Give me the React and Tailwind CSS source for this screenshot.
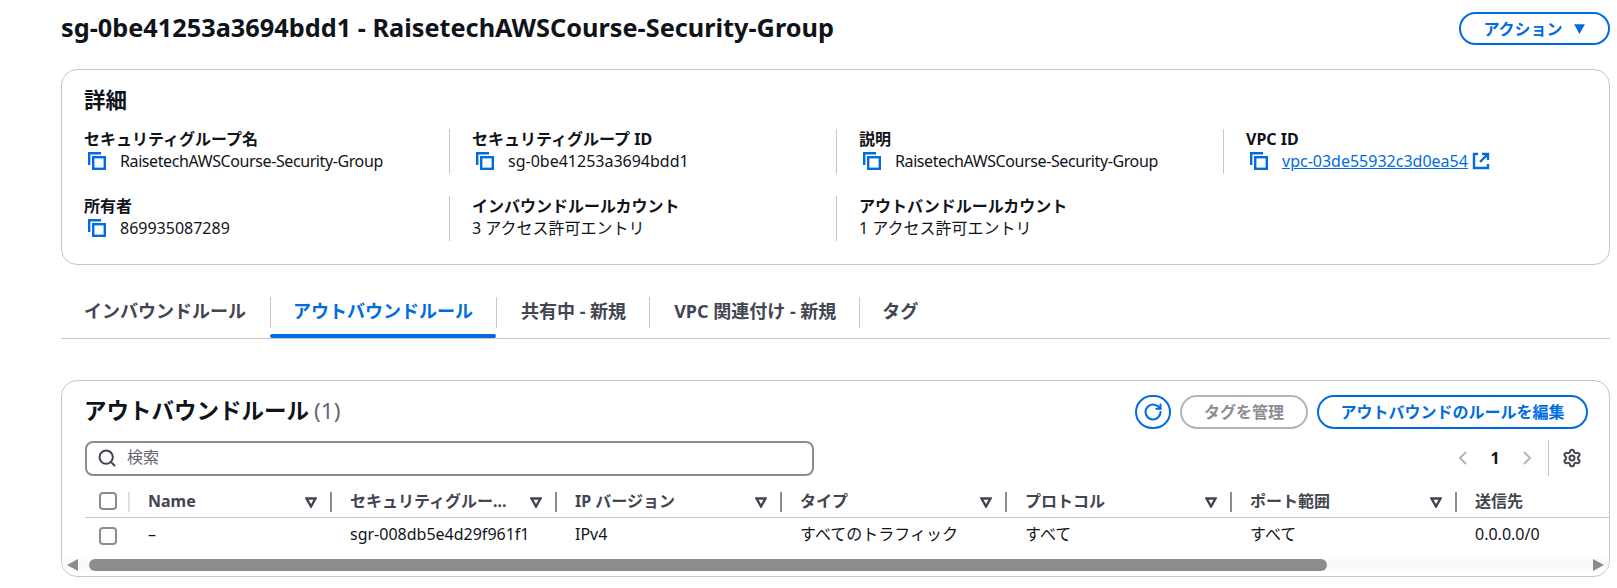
import { RotateCw, Search, Settings } from "lucide-react";

const GRID = "grid grid-cols-[45px_202px_225px_225px_225px_225px_225px_1fr]";

function CopyIcon() {
  return (
    <svg width="18" height="18" viewBox="0 0 18 18" fill="none" stroke="#006ce0" strokeWidth="2.4" className="shrink-0">
      <path d="M1.2 13V1.2H13" />
      <rect x="5.2" y="5.2" width="11.6" height="11.6" />
    </svg>
  );
}

function ExternalIcon() {
  return (
    <svg width="18" height="18" viewBox="0 0 18 18" fill="none" stroke="#006ce0" strokeWidth="2.4" className="shrink-0">
      <path d="M6 2H2v14h14v-4" />
      <path d="M10 2h6v6M16 2L8 10" />
    </svg>
  );
}

function FilterIcon() {
  return (
    <svg width="12" height="12" viewBox="0 0 12 12" fill="none" stroke="#424650" strokeWidth="2.4" className="shrink-0">
      <path d="M1.5 2.5h9L6 10.5z" />
    </svg>
  );
}

function Pager({ d }) {
  return (
    <svg width="10" height="14" viewBox="0 0 10 14" fill="none" stroke="#b4b4bb" strokeWidth="2" className="shrink-0">
      <path d={d} />
    </svg>
  );
}

function Checkbox() {
  return <div className="w-[18px] h-[18px] rounded-[4px] border-2 border-[#8c8c94] bg-white" />;
}

function Field({ label, children, divider }) {
  return (
    <div className={`h-[45px] ${divider ? "border-l border-[#c6c6cd] pl-[22px]" : ""}`}>
      <div className="text-base leading-[20px] font-bold text-[#0f141a]">{label}</div>
      <div className="text-base leading-[24px] text-[#0f141a] flex items-center">{children}</div>
    </div>
  );
}

function CopyValue({ children }) {
  return (
    <span className="flex items-center">
      <span className="pl-1 w-9 shrink-0 flex"><CopyIcon /></span>
      {children}
    </span>
  );
}

function Tab({ label, active, first, pad }) {
  return (
    <div className="flex flex-col">
      <div
        className={`h-[31px] flex items-center pb-[3px] text-lg font-bold ${first ? "" : "border-l border-[#c6c6cd]"} ${pad} ${
          active ? "text-[#006ce0]" : "text-[#424650]"
        }`}
      >
        {label}
      </div>
      <div className={`mt-[6px] h-1 rounded-[2px] ${active ? "bg-[#006ce0]" : ""}`} />
    </div>
  );
}

function HeadCell({ label, last }) {
  return (
    <div className="flex items-center justify-between pl-[18px] h-5">
      <span className="text-base leading-[20px] pb-[3px] font-bold text-[#424650] whitespace-nowrap">{label}</span>
      {!last && (
        <span className="flex items-center gap-[13px]">
          <FilterIcon />
          <span className="w-0.5 h-5 bg-[#8c8c94]" />
        </span>
      )}
    </div>
  );
}

export default function App() {
  const heads = ["Name", "セキュリティグルー...", "IP バージョン", "タイプ", "プロトコル", "ポート範囲", "送信先"];
  const cells = ["–", "sgr-008db5e4d29f961f1", "IPv4", "すべてのトラフィック", "すべて", "すべて", "0.0.0.0/0"];

  return (
    <div className="w-[1617px] h-[588px] overflow-hidden bg-white pl-[61px] pr-[7px] pt-3 font-['Noto_Sans','Noto_Sans_CJK_JP',sans-serif]">
      {/* header */}
      <div className="flex items-center justify-between h-[33px]">
        <h1 className="text-[25.3px] leading-[33px] pb-0.5 font-bold text-[#0f141a] whitespace-nowrap">
          sg-0be41253a3694bdd1 - RaisetechAWSCourse-Security-Group
        </h1>
        <button className="w-[151px] h-[33px] rounded-full border-2 border-[#006ce0] text-[#006ce0] text-base font-bold flex items-center justify-center gap-[10px]">
          アクション
          <svg width="13" height="13" viewBox="0 0 12 12" fill="#006ce0"><path d="M1 2h10L6 11z" /></svg>
        </button>
      </div>

      {/* details */}
      <section className="mt-6 h-[196px] border border-[#c6c6cd] rounded-2xl pl-[22px] pt-4">
        <h2 className="text-[21.5px] leading-[28px] font-bold text-[#0f141a]">詳細</h2>
        <div className="mt-[15px] grid grid-cols-[365px_387px_387px_1fr] gap-y-[22px]">
          <Field label="セキュリティグループ名"><CopyValue><span className="tracking-[-0.4px]">RaisetechAWSCourse-Security-Group</span></CopyValue></Field>
          <Field label="セキュリティグループ ID" divider><CopyValue>sg-0be41253a3694bdd1</CopyValue></Field>
          <Field label="説明" divider><CopyValue><span className="tracking-[-0.4px]">RaisetechAWSCourse-Security-Group</span></CopyValue></Field>
          <Field label="VPC ID" divider>
            <CopyValue>
              <span className="text-[#006ce0] underline">vpc-03de55932c3d0ea54</span>
              <span className="ml-1 flex"><ExternalIcon /></span>
            </CopyValue>
          </Field>
          <Field label="所有者"><CopyValue>869935087289</CopyValue></Field>
          <Field label="インバウンドルールカウント" divider>3 アクセス許可エントリ</Field>
          <Field label="アウトバンドルールカウント" divider>1 アクセス許可エントリ</Field>
        </div>
      </section>

      {/* tabs */}
      <div className="mt-8 flex border-b border-[#c6c6cd] h-[42px]">
        <Tab label="インバウンドルール" first pad="pl-[23px] pr-6" />
        <Tab label="アウトバウンドルール" active pad="pl-[22px] pr-[23px]" />
        <Tab label="共有中 - 新規" pad="pl-6 pr-[23px]" />
        <Tab label="VPC 関連付け - 新規" pad="pl-6 pr-[23px]" />
        <Tab label="タグ" pad="pl-[22px] pr-6" />
      </div>

      {/* rules table */}
      <section className="mt-[41px] h-[197px] border border-[#c6c6cd] rounded-2xl overflow-hidden">
        <div className="flex items-center justify-between h-[48px] pl-[22px] pr-[21px] pt-[14px]">
          <h2 className="flex items-baseline text-[22.5px] leading-[34px] pb-0.5 font-bold text-[#0f141a] whitespace-nowrap">
            アウトバウンドルール
            <span className="ml-[5px] font-normal text-[#656871]">(1)</span>
          </h2>
          <div className="flex items-center">
            <button className="w-9 h-[34px] rounded-full border-2 border-[#006ce0] text-[#006ce0] flex items-center justify-center">
              <RotateCw size={20} strokeWidth={2.5} />
            </button>
            <button className="ml-[9px] w-[128px] h-[34px] rounded-full border-2 border-[#b4b4bb] text-[#8c8c94] text-base font-bold flex items-center justify-center">
              タグを管理
            </button>
            <button className="ml-[9px] w-[271px] h-[34px] rounded-full border-2 border-[#006ce0] text-[#006ce0] text-base font-bold flex items-center justify-center">
              アウトバウンドのルールを編集
            </button>
          </div>
        </div>

        <div className="flex items-center justify-between pl-[23px] pr-[27px] mt-[11px]">
          <div className="w-[729px] h-[35px] rounded-lg border-2 border-[#8c8c94] flex items-center pl-[10px] gap-[10px]">
            <Search size={20} strokeWidth={2.4} className="text-[#424650]" />
            <span className="text-base pb-0.5 text-[#656871]">検索</span>
          </div>
          <div className="flex items-center">
            <Pager d="M8 1L2 7l6 6" />
            <span className="w-[54px] text-center text-base font-bold text-[#0f141a]">1</span>
            <Pager d="M2 1l6 6-6 6" />
            <span className="ml-4 w-px h-9 bg-[#c6c6cd]" />
            <Settings size={20} strokeWidth={2.4} className="ml-[13px] text-[#424650]" />
          </div>
        </div>

        <div className="ml-[23px] mt-4">
          <div className={`${GRID} h-[26px] border-b border-[#c6c6cd]`}>
            <div className="flex h-5 pl-[14px] justify-between">
              <Checkbox />
              <span className="w-0.5 h-5 bg-[#dedee3]" />
            </div>
            {heads.map((h, i) => (
              <HeadCell key={h} label={h} last={i === heads.length - 1} />
            ))}
          </div>
          <div className={`${GRID} h-[35px] items-center`}>
            <div className="pl-[14px]"><Checkbox /></div>
            {cells.map((c, i) => (
              <div key={i} className="pl-[18px] pb-[3px] text-base text-[#0f141a] whitespace-nowrap">{c}</div>
            ))}
          </div>
        </div>

        <div className="mt-[6px] h-3 bg-[#fafafa] flex items-center pl-[5px] pr-[5px]">
          <svg width="11" height="12" viewBox="0 0 11 12" fill="#8c8c8c" className="shrink-0"><path d="M11 0v12L0 6z" /></svg>
          <div className="ml-[11px] w-[1238px] h-3 rounded-md bg-[#8c8c8c]" />
          <svg width="11" height="12" viewBox="0 0 11 12" fill="#8c8c8c" className="shrink-0 ml-auto"><path d="M0 0v12L11 6z" /></svg>
        </div>
      </section>
    </div>
  );
}
